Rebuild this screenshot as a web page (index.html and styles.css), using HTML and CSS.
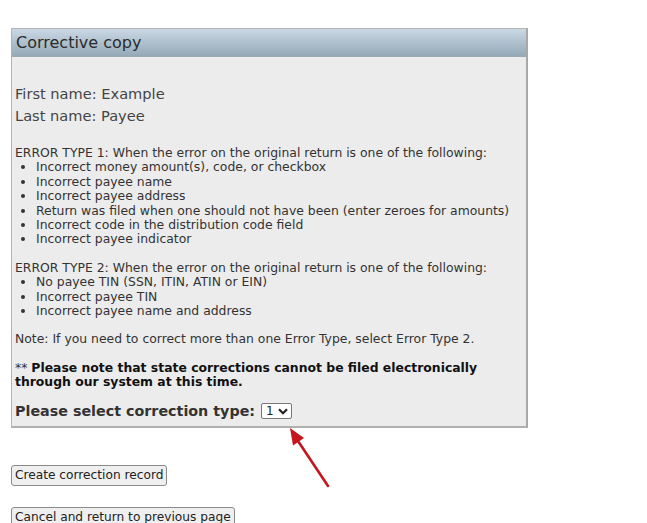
FILE: index.html
```html
<!DOCTYPE html>
<html>
<head>
<meta charset="utf-8">
<link rel="stylesheet" href="styles.css">
</head>
<body>
<div class="page">
  <div class="panel">
    <div class="panel-head">Corrective copy</div>
    <div class="panel-body">
      <div class="names">
        <div class="name-line">First name: Example</div>
        <div class="name-line">Last name: Payee</div>
      </div>
      <div class="block">
        <div>ERROR TYPE 1: When the error on the original return is one of the following:</div>
        <ul class="list">
          <li>Incorrect money amount(s), code, or checkbox</li>
          <li>Incorrect payee name</li>
          <li>Incorrect payee address</li>
          <li>Return was filed when one should not have been (enter zeroes for amounts)</li>
          <li>Incorrect code in the distribution code field</li>
          <li>Incorrect payee indicator</li>
        </ul>
      </div>
      <div class="block">
        <div>ERROR TYPE 2: When the error on the original return is one of the following:</div>
        <ul class="list">
          <li>No payee TIN (SSN, ITIN, ATIN or EIN)</li>
          <li>Incorrect payee TIN</li>
          <li>Incorrect payee name and address</li>
        </ul>
      </div>
      <div class="block">Note: If you need to correct more than one Error Type, select Error Type 2.</div>
      <div class="block notice">** <b>Please note that state corrections cannot be filed electronically through our system at this time.</b></div>
      <div class="select-row">
        <span class="select-label">Please select correction type:</span>
        <span class="select-box">1<svg class="chev" viewBox="0 0 10 7" width="10" height="7"><path d="M1 1.2 L5 5.2 L9 1.2" fill="none" stroke="#222" stroke-width="2.2"/></svg></span>
      </div>
    </div>
  </div>
  <div class="actions">
    <button class="btn">Create correction record</button>
    <button class="btn">Cancel and return to previous page</button>
  </div>
  <svg class="arrow" width="70" height="75" viewBox="0 0 70 75">
    <line x1="58" y1="66" x2="28" y2="21" stroke="#c4161c" stroke-width="2.6" stroke-linecap="round"/>
    <polygon points="20,8 34,18 23,25.5" fill="#c4161c"/>
  </svg>
</div>
</body>
</html>
```

FILE: styles.css
```css
html, body {
  margin: 0;
  padding: 0;
  background: #fff;
}
body {
  font-family: "DejaVu Sans", Verdana, sans-serif;
  color: #333;
}
.page {
  position: relative;
  padding: 28px 0 0 11px;
  height: 495px;
  overflow: hidden;
}
.panel {
  width: 514px;
  border: 1px solid #b4b4b4;
  border-right: 2px solid #a8a8a8;
  border-bottom: 2px solid #b0b0b0;
  background: #ececec;
}
.panel-head {
  height: 27px;
  line-height: 27px;
  padding-left: 4px;
  font-size: 16px;
  color: #2b2b2b;
  background: linear-gradient(#cad8e4, #94a9b6);
  border-bottom: 1px solid #9aaab4;
}
.panel-body {
  padding: 0 3px 6px 3px;
  font-size: 12.4px;
  line-height: 14.4px;
}
.names {
  padding-top: 26px;
  padding-bottom: 19px;
  font-size: 14.6px;
  line-height: 22px;
  color: #444;
}
.block {
  margin-bottom: 14px;
}
.list {
  list-style: disc;
  margin: 0;
  padding-left: 21px;
}
.notice b {
  font-weight: bold;
  color: #111;
}
.notice {
  margin-bottom: 13px;
}
.select-row {
  display: flex;
  align-items: center;
  gap: 6px;
  font-size: 14.3px;
  line-height: 17px;
  font-weight: bold;
  color: #333;
}
.select-box {
  display: inline-flex;
  align-items: center;
  gap: 4px;
  height: 14px;
  padding: 0 3px 0 4px;
  border: 1px solid #777;
  border-radius: 2px;
  background: #fff;
  font-size: 12px;
  font-weight: normal;
  color: #222;
}
.actions {
  display: flex;
  flex-direction: column;
  align-items: flex-start;
  gap: 21px;
  margin-top: 37px;
}
.btn {
  font-family: "DejaVu Sans", Verdana, sans-serif;
  font-size: 12.2px;
  color: #222;
  background: #efefef;
  border: 1px solid #8a8a8a;
  border-radius: 3px;
  padding: 1px 3px;
  height: 21px;
}
.arrow {
  position: absolute;
  left: 270px;
  top: 420px;
}
```
